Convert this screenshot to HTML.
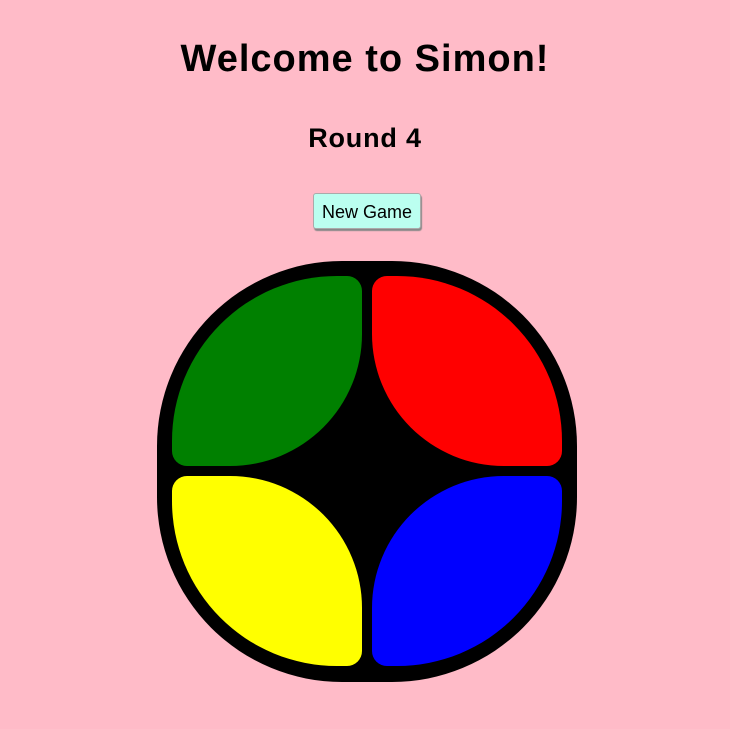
<!DOCTYPE html>
<html><head><style>
html,body{margin:0;padding:0;background:#ffbbc8;width:730px;height:729px;overflow:hidden;font-family:"Liberation Sans",sans-serif}
h1{position:absolute;top:38px;left:0;width:730px;text-align:center;margin:0;font-size:38px;font-weight:bold;letter-spacing:1px}
h2{position:absolute;top:123px;left:0;width:730px;text-align:center;margin:0;font-size:27px;font-weight:bold;letter-spacing:0.8px}
.btn{position:absolute;left:313px;top:193px;width:108px;height:36px;background:#bbfff0;border:1px solid #aaa;border-radius:3px;box-shadow:1px 2px 1px #888;font-size:18px;line-height:36px;text-align:center;box-sizing:border-box}
.board{position:absolute;left:157px;top:261px;width:420px;height:421px;background:#000;border-radius:185px}
.q{position:absolute;width:190px;height:190px}
.g{left:172px;top:276px;background:#008000;border-radius:165px 15px 132px 15px}
.r{left:372px;top:276px;background:#f00;border-radius:15px 165px 15px 132px}
.y{left:172px;top:476px;background:#ff0;border-radius:15px 132px 15px 165px}
.b{left:372px;top:476px;background:#00f;border-radius:132px 15px 165px 15px}
</style></head><body>
<h1>Welcome to Simon!</h1>
<h2>Round 4</h2>
<div class="btn">New Game</div>
<div class="board"></div>
<div class="q g"></div><div class="q r"></div><div class="q y"></div><div class="q b"></div>
</body></html>
